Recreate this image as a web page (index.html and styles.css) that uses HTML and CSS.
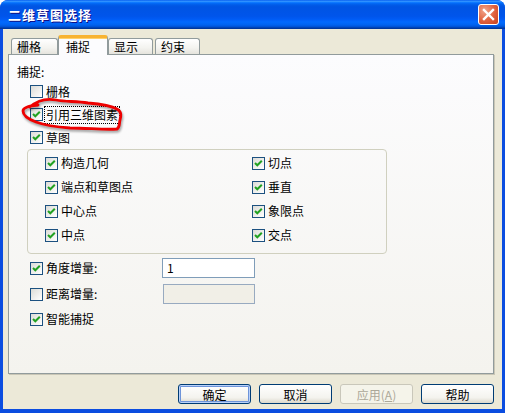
FILE: index.html
```html
<!DOCTYPE html>
<html>
<head>
    <title>二维草图选择</title>
    <link rel="stylesheet" href="styles.css">
</head>
<body>
    <div class="window">
        <div class="titlebar">
            <span class="title">二维草图选择</span>
            <span class="close">
                <svg width="19" height="19" viewBox="0 0 19 19"><path d="M5 5 L14 14 M14 5 L5 14" stroke="#fff" stroke-width="2.4" stroke-linecap="square"/></svg>
            </span>
        </div>

        <div class="client">
            <div class="tabs">
                <div class="tab t1">栅格</div>
                <div class="tab active">捕捉</div>
                <div class="tab t3">显示</div>
                <div class="tab t4">约束</div>
            </div>

            <div class="panel">
                <div class="caption">捕捉:</div>

                <div class="rows">
                    <label class="check"><span class="box"></span><span>栅格</span></label>
                    <label class="check"><span class="box on"></span><span class="focus">引用三维图素</span></label>
                    <label class="check"><span class="box on"></span><span>草图</span></label>
                </div>

                <div class="group">
                    <label class="check"><span class="box on"></span><span>构造几何</span></label>
                    <label class="check"><span class="box on"></span><span>切点</span></label>
                    <label class="check"><span class="box on"></span><span>端点和草图点</span></label>
                    <label class="check"><span class="box on"></span><span>垂直</span></label>
                    <label class="check"><span class="box on"></span><span>中心点</span></label>
                    <label class="check"><span class="box on"></span><span>象限点</span></label>
                    <label class="check"><span class="box on"></span><span>中点</span></label>
                    <label class="check"><span class="box on"></span><span>交点</span></label>
                </div>

                <div class="rows">
                    <div class="field">
                        <label class="check"><span class="box on"></span><span class="field-label">角度增量:</span></label>
                        <span class="edit">1</span>
                    </div>
                    <div class="field">
                        <label class="check"><span class="box"></span><span class="field-label">距离增量:</span></label>
                        <span class="edit disabled"></span>
                    </div>
                    <label class="check last"><span class="box on"></span><span>智能捕捉</span></label>
                </div>
            </div>

            <div class="buttons">
                <button class="default">确定</button>
                <button>取消</button>
                <button disabled>应用(<u>A</u>)</button>
                <button>帮助</button>
            </div>
        </div>

        <!-- red hand-drawn mark over the screenshot -->
        <svg class="scribble" width="505" height="413" viewBox="0 0 505 413">
            <defs>
                <filter id="soft" x="-20%" y="-20%" width="140%" height="140%"><feGaussianBlur stdDeviation="1.2"/></filter>
            </defs>
            <path class="shade" filter="url(#soft)" transform="translate(1 2)" d="M30 107 C38 100 46 98 56 100 C66 102 76 101 88 103 C100 104 110 105 117 109 C122 112 121 116 120 120 C119 124 120 127 117 129 C104 130 88 128 70 128 C56 127 44 125 36 122 C28 119 23 115 23 111 C23 108 28 106 38 105"/>
            <path class="pen" d="M30 107 C38 100 46 98 56 100 C66 102 76 101 88 103 C100 104 110 105 117 109 C122 112 121 116 120 120 C119 124 120 127 117 129 C104 130 88 128 70 128 C56 127 44 125 36 122 C28 119 23 115 23 111 C23 108 28 106 38 105"/>
        </svg>
    </div>
</body>
</html>
```

FILE: styles.css
```css
body { margin: 0; background: #fff; font-family: "Noto Sans CJK SC", sans-serif; font-size: 12px; color: #000; }

.window { position: relative; width: 505px; height: 413px; display: flex; flex-direction: column; background: #0B4DE0; border-radius: 8px 8px 0 0; overflow: hidden; }

.titlebar { flex: none; height: 29px; display: flex; align-items: center; justify-content: space-between; padding: 0 6px 0 8px; box-sizing: border-box;
    background: linear-gradient(#0058EE 0%, #3593FF 4%, #288EFF 6%, #127DFF 8%, #036FFC 10%, #0262EE 14%, #0057E5 20%, #0054E3 24%, #0055EB 56%, #005BF5 66%, #026AFE 76%, #0062EF 86%, #0052D6 92%, #0040AB 96%, #003092 100%); }
.title { color: #fff; font-weight: bold; font-size: 13px; letter-spacing: 1px; text-shadow: 1px 1px #0F1089; }
.close { width: 21px; height: 21px; box-sizing: border-box; border: 1px solid #fff; border-radius: 3px; display: flex; align-items: center; justify-content: center;
    background: radial-gradient(circle at 30% 30%, #F0A58C, #E0603C 55%, #C4401E); }

.client { flex: 1; margin: 0 3px 4px 3px; background: #ECE9D8; display: flex; flex-direction: column; padding: 6px 8px 0 5px; }

.tabs { height: 19px; display: flex; align-items: flex-end; margin-left: 3px; }
.tab { height: 16px; box-sizing: border-box; border: 1px solid #919B9C; border-bottom: none; border-radius: 3px 3px 0 0; padding: 0 0 0 5px; line-height: 15px;
    background: linear-gradient(#FFFFFF, #F3F3EF 60%, #E5E4DD); }
.t1 { width: 47px; }
.t3 { width: 45px; }
.t4 { width: 45px; margin-left: 2px; }
.tab.active { width: 50px; height: 20px; margin-bottom: -1px; position: relative; z-index: 1; padding-left: 7px; line-height: 17px; background: #FCFCFE; border-top: 3px solid #F8B331; box-shadow: inset 0 1px 0 #FFD06B; }

.panel { position: relative; height: 320px; box-sizing: border-box; border: 1px solid #919B9C; box-shadow: 1px 1px 0 #C9C6B6; padding: 0 8px; background: linear-gradient(#FCFCFE, #F4F3EE); }
.caption { height: 14px; line-height: 14px; margin-top: 10px; }

.rows { margin-left: 13px; margin-top: 1px; }
.check { display: flex; align-items: center; gap: 3px; height: 23px; line-height: 14px; }
.box { width: 13px; height: 13px; box-sizing: border-box; border: 1px solid #1C5180; background: linear-gradient(135deg, #DCDCD7, #FFFFFF); flex: none; }
.box.on { background: url("data:image/svg+xml,%3Csvg xmlns='http://www.w3.org/2000/svg' width='11' height='11'%3E%3Cpath d='M2 5 L4.3 7.3 L8.8 2.8' fill='none' stroke='%2321A121' stroke-width='2'/%3E%3C/svg%3E") no-repeat, linear-gradient(135deg, #DCDCD7, #FFFFFF); }
.focus { outline: 1px dotted #000; outline-offset: 1px; }

.group { margin-left: 10px; width: 360px; height: 105px; box-sizing: border-box; border: 1px solid #D0D0BF; border-radius: 4px; padding: 1px 0 0 17px; display: grid; grid-template-columns: 207px 1fr; grid-auto-rows: 24px; }
.group .check { height: 24px; }

.field { display: flex; align-items: center; height: 26px; }
.field:first-child { margin-top: 1px; }
.field-label { width: 116px; }
.edit { width: 93px; height: 20px; box-sizing: border-box; border: 1px solid #7F9DB9; background: #fff; padding: 2px 4px; line-height: 14px; }
.edit.disabled { background: #F1EFE7; border-color: #98AAC0; margin-left: 1px; width: 92px; }
.check.last { height: 24px; }

.buttons { display: flex; justify-content: flex-end; gap: 8px; margin-top: 10px; }
button { width: 73px; height: 20px; padding: 0; font-family: "Noto Sans CJK SC", sans-serif; font-size: 12px; color: #000; border: 1px solid #003C74; border-radius: 3px;
    background: linear-gradient(#FFFFFF, #F4F3EE 70%, #DCD8CC); }
button.default { box-shadow: inset 0 0 0 1px #B9D1FA, inset 0 0 0 2px #6E94D9; }
button:disabled { color: #ACA899; border-color: #C9C7BA; background: #F5F4EA; }

.scribble { position: absolute; left: 0; top: 0; pointer-events: none; }
.scribble path { fill: none; stroke-linecap: round; stroke-linejoin: round; }
.pen { stroke: #EE0000; stroke-width: 2.8; }
.shade { stroke: rgba(0, 0, 0, 0.35); stroke-width: 3; }
```
